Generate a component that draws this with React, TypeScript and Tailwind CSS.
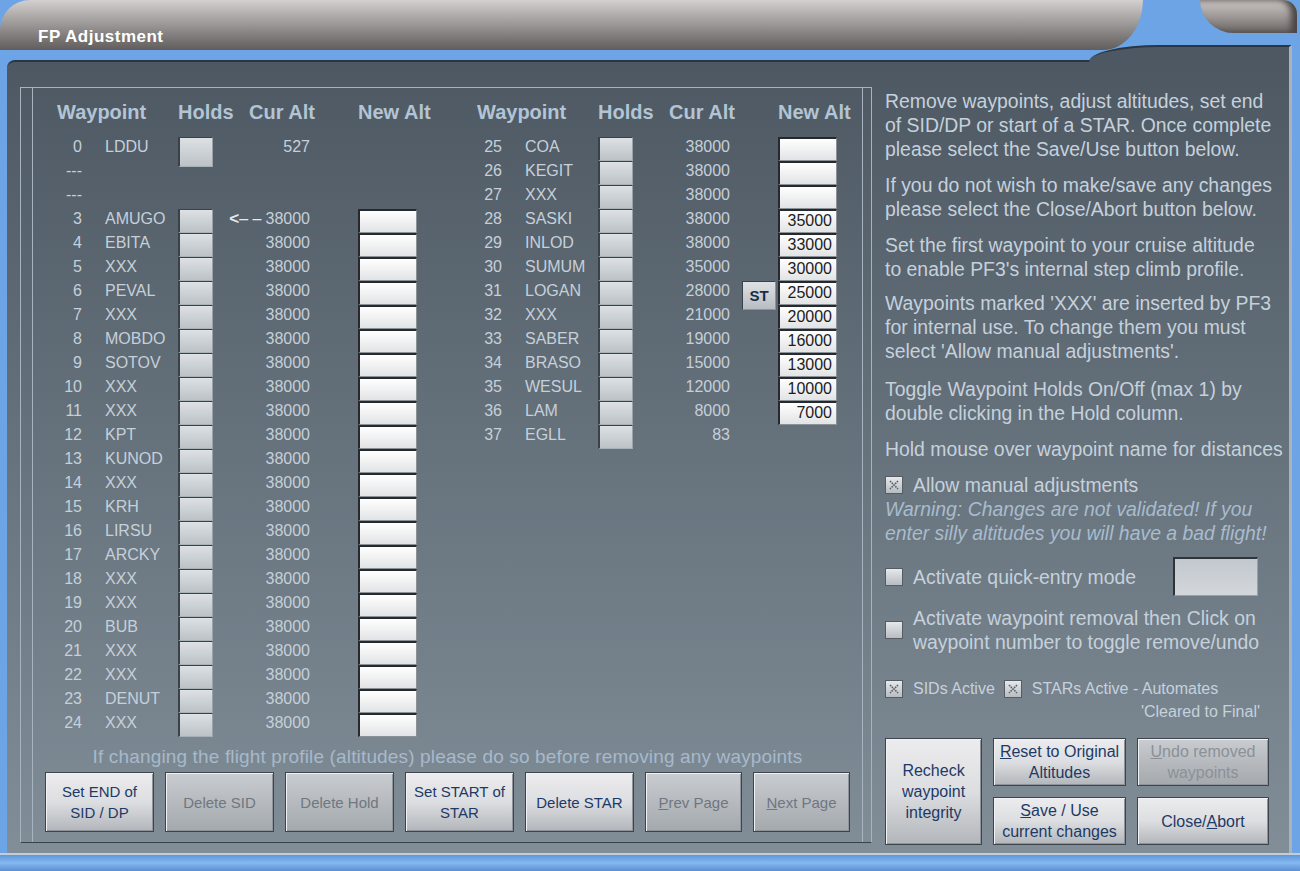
import React from "react";
import clsx from "clsx";

type Row = {
	n: string;
	name?: string;
	hold?: boolean;
	cur?: string;
	alt?: string;
	st?: boolean;
	arrow?: boolean;
	tall?: boolean;
};

const leftRows: Row[] = [
	{ n: "0", name: "LDDU", hold: true, cur: "527", tall: true },
	{ n: "---" },
	{ n: "---" },
	{ n: "3", name: "AMUGO", hold: true, cur: "38000", alt: "", arrow: true },
	...[
		"EBITA", "XXX", "PEVAL", "XXX", "MOBDO", "SOTOV", "XXX", "XXX", "KPT", "KUNOD", "XXX",
		"KRH", "LIRSU", "ARCKY", "XXX", "XXX", "BUB", "XXX", "XXX", "DENUT", "XXX",
	].map((name, i) => ({ n: String(i + 4), name, hold: true, cur: "38000", alt: "" })),
];

const rightRows: Row[] = [
	{ n: "25", name: "COA", hold: true, cur: "38000", alt: "" },
	{ n: "26", name: "KEGIT", hold: true, cur: "38000", alt: "" },
	{ n: "27", name: "XXX", hold: true, cur: "38000", alt: "" },
	{ n: "28", name: "SASKI", hold: true, cur: "38000", alt: "35000" },
	{ n: "29", name: "INLOD", hold: true, cur: "38000", alt: "33000" },
	{ n: "30", name: "SUMUM", hold: true, cur: "35000", alt: "30000" },
	{ n: "31", name: "LOGAN", hold: true, cur: "28000", alt: "25000", st: true },
	{ n: "32", name: "XXX", hold: true, cur: "21000", alt: "20000" },
	{ n: "33", name: "SABER", hold: true, cur: "19000", alt: "16000" },
	{ n: "34", name: "BRASO", hold: true, cur: "15000", alt: "13000" },
	{ n: "35", name: "WESUL", hold: true, cur: "12000", alt: "10000" },
	{ n: "36", name: "LAM", hold: true, cur: "8000", alt: "7000" },
	{ n: "37", name: "EGLL", hold: true, cur: "83" },
];

function WpRow({ r }: { r: Row }) {
	return (
		<div className="flex h-6 items-start text-[16px] leading-5 text-[#c6d0da] whitespace-nowrap">
			<div className="w-[42px] shrink-0 text-right">{r.n}</div>
			<div className="w-[23px] shrink-0" />
			<div className="w-[73px] shrink-0">{r.name}</div>
			<div className="w-[35px] shrink-0 self-stretch">
				{r.hold && (
					<div
						className={clsx(
							"border-t border-l-2 border-[#3a4149] border-r border-r-[#9aa2aa] border-b border-b-[#a9b1b8] bg-gradient-to-b from-[#dde1e4] to-[#bcc2c7]",
							r.tall ? "h-[30px]" : "h-full"
						)}
					/>
				)}
			</div>
			<div className="w-[97px] shrink-0 text-right">
				{r.arrow && (
					<span className="mr-[4px] text-[#e4e9ee]">
						<span className="text-[17px] font-bold">&lt;</span>– –
					</span>
				)}
				{r.cur}
			</div>
			<div className="w-[48px] shrink-0 pl-[12px]">
				{r.st && (
					<div className="flex h-[29px] w-[34px] items-center justify-center border-t border-l border-[#3a4149] border-r border-b border-r-[#8d959c] border-b-[#8d959c] bg-gradient-to-b from-[#dfe2e5] to-[#b7bdc2] text-[15px] font-bold text-[#1b2d48]">
						ST
					</div>
				)}
			</div>
			<div className="w-[59px] shrink-0 self-stretch">
				{r.alt !== undefined && (
					<div className="h-full border-t-2 border-l-2 border-[#262a2f] border-r border-b border-r-[#8a9298] border-b-[#8a9298] bg-gradient-to-b from-[#ffffff] to-[#e2e3e5] pr-[4px] text-right text-[16px] leading-5 text-[#1c1c1c]">
						{r.alt}
					</div>
				)}
			</div>
		</div>
	);
}

function Table({ rows }: { rows: Row[] }) {
	return (
		<div className="w-[377px] shrink-0">
			<div className="flex h-6 items-center text-[20px] font-bold leading-6 text-[#b3c4d5] whitespace-nowrap">
				<div className="w-[138px] shrink-0 pl-[17px]">Waypoint</div>
				<div className="w-[71px] shrink-0">Holds</div>
				<div className="w-[109px] shrink-0">Cur Alt</div>
				<div className="shrink-0">New Alt</div>
			</div>
			<div className="mt-[13px]">
				{rows.map((r, i) => (
					<WpRow key={i} r={r} />
				))}
			</div>
		</div>
	);
}

function Btn({
	children,
	off,
	className,
}: {
	children: React.ReactNode;
	off?: boolean;
	className?: string;
}) {
	return (
		<div
			className={clsx(
				"flex items-center justify-center border border-[#3d444b] text-center leading-[21px] shadow-[inset_1px_1px_0_#f2f2f4,inset_-1px_-1px_0_#8e9499]",
				off
					? "bg-gradient-to-b from-[#c9ccd0] to-[#a4a9ae] text-[#6f777f]"
					: "bg-gradient-to-b from-[#ececee] via-[#dddee1] to-[#b2b6ba] text-[#1d3a66]",
				className
			)}
		>
			<span>{children}</span>
		</div>
	);
}

function Check({ on }: { on?: boolean }) {
	return (
		<div className="flex h-[18px] w-[18px] shrink-0 items-center justify-center border border-[#555c63] bg-gradient-to-b from-[#e6e8ea] to-[#b8bdc2]">
			{on && (
				<svg width="14" height="14" viewBox="0 0 14 14">
					<path d="M3 3l8 8M11 3l-8 8" stroke="#5b6065" strokeWidth="1.6" strokeDasharray="1.6 0.9" fill="none" />
				</svg>
			)}
		</div>
	);
}

export default function App() {
	return (
		<div className="relative h-[871px] w-[1300px] overflow-hidden bg-[#6ca4e6] font-['Liberation_Sans',Arial,sans-serif]">
			{/* title bar */}
			<div className="flex h-[50px]">
				<div className="w-[1143px] rounded-tl-[30px] rounded-br-[40px_50px] bg-gradient-to-b from-[#d4d0d0] via-[#9a9696] to-[#615d5d] pl-[38px] pt-[27px] text-[17px] font-bold leading-5 tracking-[0.5px] text-white">
					FP Adjustment
				</div>
				<div className="w-[57px]" />
				<div className="mr-[3px] h-[33px] flex-1 rounded-bl-[34px_33px] rounded-tr-[14px] bg-gradient-to-b from-[#cdc8c6] via-[#9e9896] to-[#6a6462] shadow-[inset_-6px_0_6px_#4a4544]" />
			</div>

			{/* main panel */}
			<div className="relative ml-[7px] mr-[8px] mt-[10px] flex h-[793px] rounded-tl-[8px] border-t-2 border-r-[3px] border-[#2b3644] border-r-[#a9b3bd] bg-gradient-to-b from-[#4d5862] to-[#818e98] pl-[13px] pt-[25px]">
				<div className="absolute right-[-3px] top-[-17px] h-[20px] w-[203px] rounded-tl-[70px_17px] border-t-2 border-r-[3px] border-[#2b3644] border-r-[#a9b3bd] bg-[#4d5862]" />

				{/* waypoint group */}
				<div className="h-[756px] w-[852px] shrink-0 border-l border-r border-t border-[#a7b3bf] border-b-[#39424b] border-b">
					<div className="ml-[11px] mr-[8px] h-full border-l border-r border-[#a7b3bf] pt-[12px]">
						<div className="flex items-start gap-[43px] pl-[7px]">
							<Table rows={leftRows} />
							<Table rows={rightRows} />
						</div>
						<div className="mt-2 whitespace-nowrap text-center text-[19px] leading-6 tracking-[0.15px] text-[#a7b9cb]">
							If changing the flight profile (altitudes) please do so before removing any waypoints
						</div>
						<div className="ml-[12px] mt-[3px] flex gap-[11px] text-[15px]">
							<Btn className="h-[60px] w-[109px]">
								Set END of
								<br />
								SID / DP
							</Btn>
							<Btn off className="h-[60px] w-[109px]">
								Delete SID
							</Btn>
							<Btn off className="h-[60px] w-[109px]">
								Delete Hold
							</Btn>
							<Btn className="h-[60px] w-[109px]">
								Set START of
								<br />
								STAR
							</Btn>
							<Btn className="h-[60px] w-[109px]">Delete STAR</Btn>
							<Btn off className="h-[60px] w-[97px]">
								<u>P</u>rev Page
							</Btn>
							<Btn off className="h-[60px] w-[97px]">
								<u>N</u>ext Page
							</Btn>
						</div>
					</div>
				</div>

				{/* info column */}
				<div className="ml-[13px] w-[400px] whitespace-nowrap pt-[2px] text-[19.4px] leading-6 text-[#c6d1dc]">
					<p>
						Remove waypoints, adjust altitudes, set end
						<br />
						of SID/DP or start of a STAR. Once complete
						<br />
						please select the Save/Use button below.
					</p>
					<p className="mt-3">
						If you do not wish to make/save any changes
						<br />
						please select the Close/Abort button below.
					</p>
					<p className="mt-3">
						Set the first waypoint to your cruise altitude
						<br />
						to enable PF3's internal step climb profile.
					</p>
					<p className="mt-[10px]">
						Waypoints marked 'XXX' are inserted by PF3
						<br />
						for internal use. To change them you must
						<br />
						select 'Allow manual adjustments'.
					</p>
					<p className="mt-[14px]">
						Toggle Waypoint Holds On/Off (max 1) by
						<br />
						double clicking in the Hold column.
					</p>
					<p className="mt-3">Hold mouse over waypoint name for distances</p>
					<div className="mt-3 flex items-center gap-[10px]">
						<Check on />
						<span>Allow manual adjustments</span>
					</div>
					<p className="italic text-[#a9bccd]">
						Warning: Changes are not validated! If you
						<br />
						enter silly altitudes you will have a bad flight!
					</p>
					<div className="mt-3 flex h-[39px] items-center">
						<Check />
						<span className="ml-[10px] w-[260px]">Activate quick-entry mode</span>
						<div className="h-[39px] w-[85px] border-l-2 border-t-2 border-[#2e343a] border-b border-r border-b-[#9aa2a9] border-r-[#9aa2a9] bg-gradient-to-b from-[#c2c8ce] to-[#d3d7db]" />
					</div>
					<div className="mt-[10px] flex items-center gap-[10px]">
						<Check />
						<span>
							Activate waypoint removal then Click on
							<br />
							waypoint number to toggle remove/undo
						</span>
					</div>
					<div className="mt-[25px] flex items-center text-[16px] leading-5">
						<Check on />
						<span className="ml-[10px]">SIDs Active</span>
						<span className="ml-[9px]">
							<Check on />
						</span>
						<span className="ml-[10px]">STARs Active - Automates</span>
					</div>
					<div className="mt-[3px] pr-[25px] text-right text-[16px] leading-5">'Cleared to Final'</div>
					<div className="mt-[16px] grid grid-cols-[97px_133px_132px] grid-rows-[48px_48px] gap-[11px] text-[16px]">
						<Btn className="row-span-2">
							Recheck
							<br />
							waypoint
							<br />
							integrity
						</Btn>
						<Btn>
							<u>R</u>eset to Original
							<br />
							Altitudes
						</Btn>
						<Btn off className="text-[#8b9197]">
							<u>U</u>ndo removed
							<br />
							waypoints
						</Btn>
						<Btn>
							<u>S</u>ave / Use
							<br />
							current changes
						</Btn>
						<Btn>
							Close/<u>A</u>bort
						</Btn>
					</div>
				</div>
			</div>

			{/* bottom bar */}
			<div className="h-[18px] border-t-2 border-[#c3cdd8] bg-gradient-to-b from-[#5f97da] via-[#86b8f0] to-[#5a8fd2]" />
		</div>
	);
}
